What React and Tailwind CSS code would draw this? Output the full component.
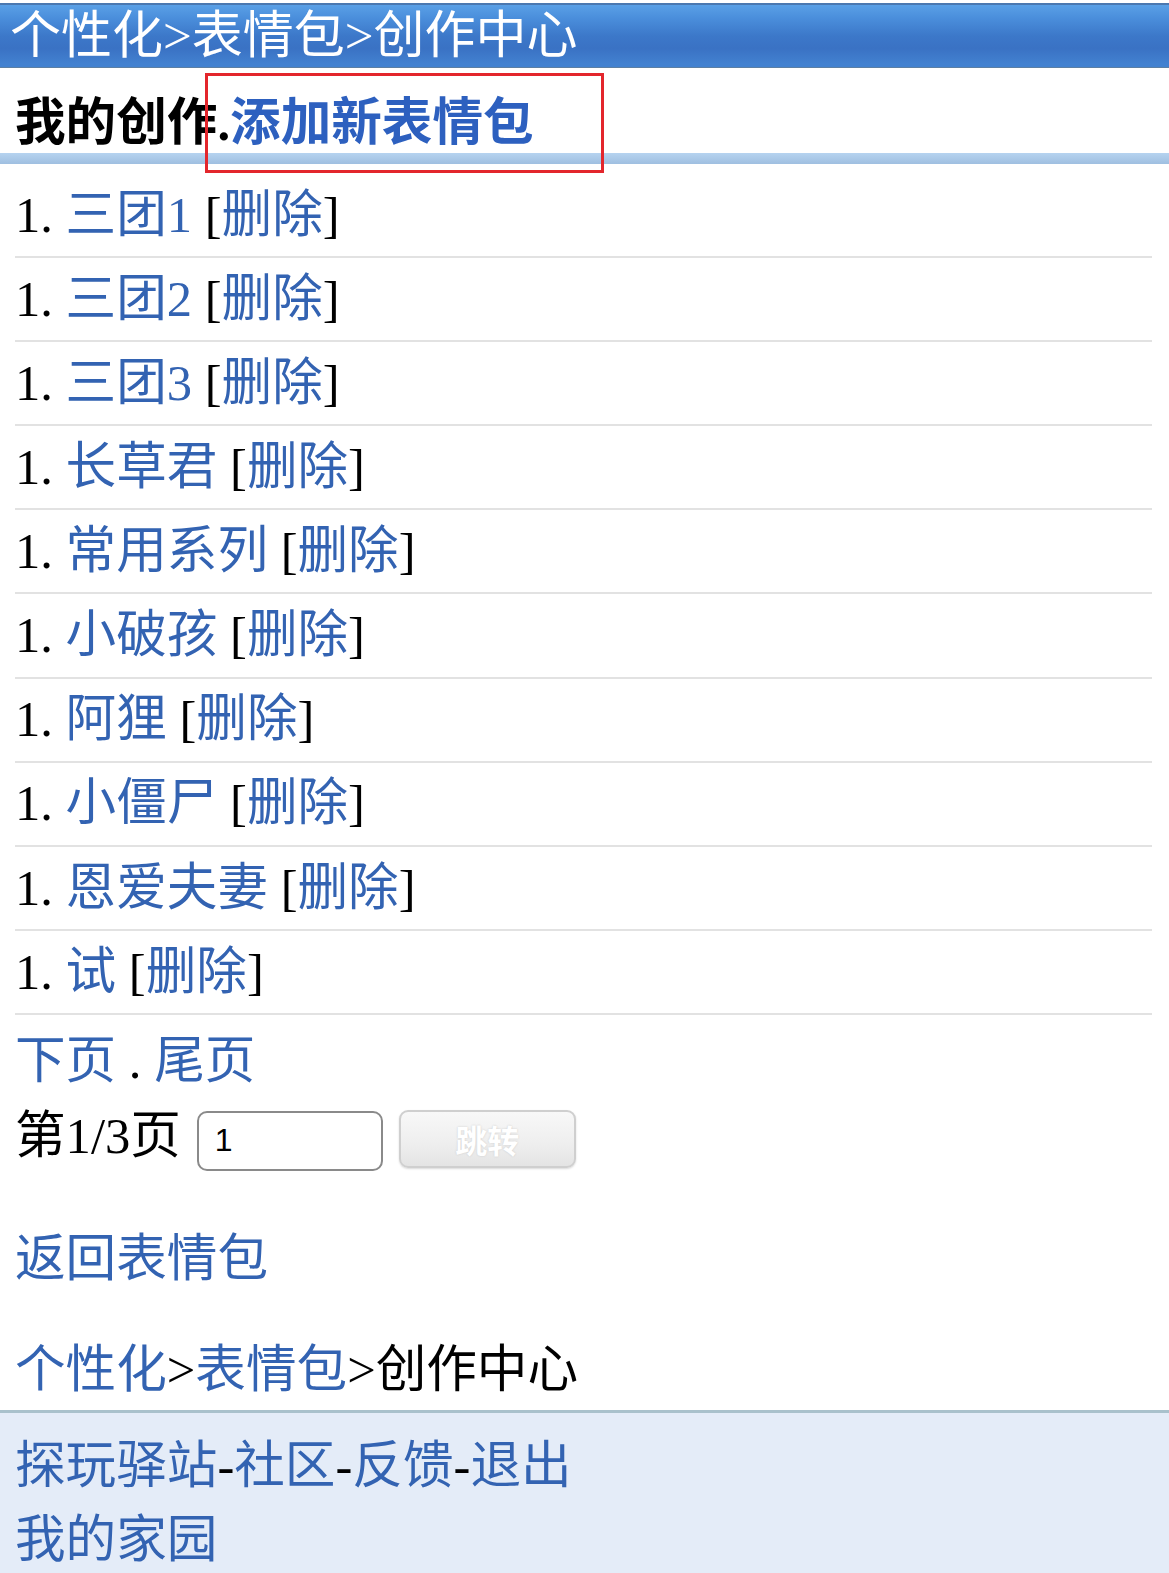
const items = ['三团1', '三团2', '三团3', '长草君', '常用系列', '小破孩', '阿狸', '小僵尸', '恩爱夫妻', '试'];

export default function App() {
  const link = 'text-[#3363b2]';

  return (
    <div className="w-[1169px] min-h-[1573px] bg-white font-['Liberation_Serif','Noto_Sans_CJK_SC',serif] text-black pt-[3px] overflow-hidden">
      {/* top bar */}
      <div className="h-[65px] flex items-center pl-[10px] border-t-2 border-b border-t-[#4b78b0] border-b-[#5c7fa3] bg-[linear-gradient(to_bottom,#5aa0e6_0%,#4b8fdc_20%,#3c78c9_50%,#3a72c4_70%,#4281d0_95%)]">
        <span className="text-white text-[51px] leading-none">个性化&gt;表情包&gt;创作中心</span>
      </div>

      {/* title */}
      <div className="relative h-[85px] pl-[15px] pt-[30px]">
        <h1 className="text-[50.6px] leading-[50px] font-bold">
          我的创作.<a className="text-[#2d60bf]">添加新表情包</a>
        </h1>
        <div className="absolute left-[205px] top-[5px] w-[399px] h-[100px] border-[3px] border-[#e3262c]"></div>
      </div>
      <div className="h-[11px] bg-[linear-gradient(to_bottom,#b6d3f0,#9fbfe0)]"></div>

      {/* list */}
      <ul className="ml-[15px] mr-[17px] mt-[10px]">
        {items.map((name, i) => (
          <li key={i} className="h-[84.1px] flex items-center border-b-2 border-[#e2e2e2] text-[50.6px] leading-none whitespace-pre">
            <span>1. </span>
            <a className={link}>{name}</a>
            <span> [</span>
            <a className={link}>删除</a>
            <span>]</span>
          </li>
        ))}
      </ul>

      {/* paging */}
      <div className="px-[15px] text-[50.6px]">
        <div className="mt-[16px] h-[60px] flex items-center leading-none whitespace-pre">
          <a className={link}>下页</a>
          <span> . </span>
          <a className={link}>尾页</a>
        </div>
        <div className="mt-[17px] h-[76px] flex items-start gap-[16px]">
          <span className="h-[56px] flex items-center leading-none">第1/3页</span>
          <input
            defaultValue="1"
            className="mt-[3px] w-[186px] h-[60px] border-2 border-[#8a8a8a] rounded-[10px] pl-[16px] text-[32px] font-['Liberation_Sans',sans-serif] bg-white outline-none"
          />
          <button className="mt-[2px] w-[177px] h-[58px] rounded-[9px] border-2 border-[#cfcfcf] bg-[linear-gradient(to_bottom,#f8f8f8,#eeeeee_60%,#e4e4e4)] text-white text-[32px] font-bold font-['Noto_Sans_CJK_SC',sans-serif] [text-shadow:0_0_2px_#c8c8c8] shadow-[0_1px_2px_rgba(0,0,0,0.15)]">
            跳转
          </button>
        </div>
        <div className="mt-[45px] h-[60px] flex items-center leading-none">
          <a className={link}>返回表情包</a>
        </div>
        <div className="mt-[51px] h-[60px] flex items-center leading-none">
          <a className={link}>个性化</a>
          <span>&gt;</span>
          <a className={link}>表情包</a>
          <span>&gt;创作中心</span>
        </div>
      </div>

      {/* footer */}
      <div className="mt-[10px] border-t-[3px] border-[#a9c1cc] bg-[#e4ecf8] pt-[16px] px-[15px] text-[50.6px] leading-none">
        <div className="h-[75px] flex items-center">
          <a className={link}>探玩驿站</a>-<a className={link}>社区</a>-<a className={link}>反馈</a>-<a className={link}>退出</a>
        </div>
        <div className="h-[72px] flex items-center">
          <a className={link}>我的家园</a>
        </div>
      </div>
    </div>
  );
}
